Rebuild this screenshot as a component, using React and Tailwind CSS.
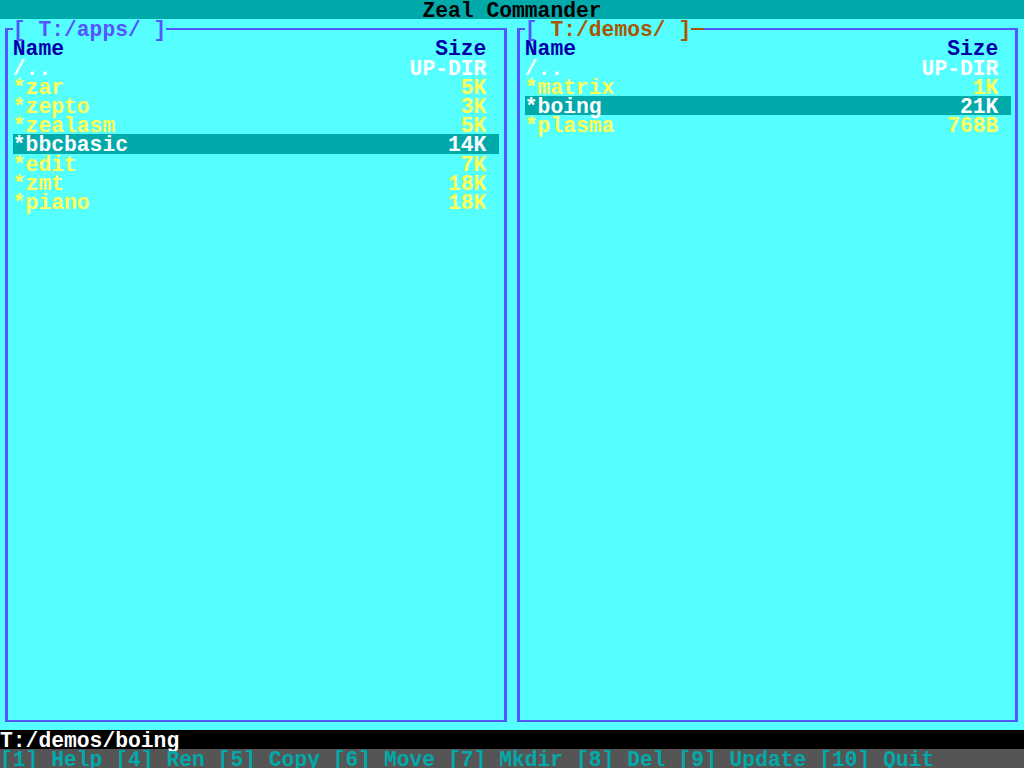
import React from 'react';

const leftFiles = [
  { name: '/..', size: 'UP-DIR', kind: 'up' },
  { name: '*zar', size: '5K' },
  { name: '*zepto', size: '3K' },
  { name: '*zealasm', size: '5K' },
  { name: '*bbcbasic', size: '14K', selected: true },
  { name: '*edit', size: '7K' },
  { name: '*zmt', size: '18K' },
  { name: '*piano', size: '18K' },
];

const rightFiles = [
  { name: '/..', size: 'UP-DIR', kind: 'up' },
  { name: '*matrix', size: '1K' },
  { name: '*boing', size: '21K', selected: true },
  { name: '*plasma', size: '768B' },
];

// one text cell row: 19.2px tall, baseline pushed down like the VGA font
const row = 'h-[19.2px] pt-[4px] leading-[15.2px]';

function FileRow({ file }) {
  let color = 'text-[#FFFF55]';
  if (file.kind === 'up') color = 'text-white';
  if (file.selected) color = 'text-white bg-[#00AAAA]';
  return (
    <div className={`flex w-[486.4px] justify-between pr-[12.8px] ${row} ${color}`}>
      <span>{file.name}</span>
      <span>{file.size}</span>
    </div>
  );
}

function Panel({ files, label, boxClass }) {
  return (
    <div className="relative h-[710.4px] w-[512px] flex">
      <div className={`flex-1 mt-[8.8px] mb-[7.6px] border-x-[3px] border-y-[2px] border-[#5555FF] pl-[4.8px] pt-[8.4px] ${boxClass}`}>
        <div className={`flex w-[486.4px] justify-between pr-[12.8px] text-[#0000AA] ${row}`}>
          <span>Name</span>
          <span>Size</span>
        </div>
        {files.map((f) => (
          <FileRow key={f.name} file={f} />
        ))}
      </div>
      {/* path label sits on top of the frame line */}
      <div className={`absolute top-0 left-[12.8px] flex bg-[#55FFFF] whitespace-pre ${row}`}>
        {label}
      </div>
    </div>
  );
}

export default function App() {
  return (
    <div className="h-[768px] w-[1024px] overflow-hidden bg-[#55FFFF] font-['Liberation_Mono','DejaVu_Sans_Mono',monospace] text-[21.333px] font-bold">
      <div className={`bg-[#00AAAA] text-center text-black ${row}`}>Zeal Commander</div>
      <div className="flex">
        <Panel
          files={leftFiles}
          boxClass="mx-[5px]"
          label={<span className="text-[#5555FF]">[ T:/apps/ ]</span>}
        />
        <Panel
          files={rightFiles}
          boxClass="ml-[5px] mr-[6px]"
          label={
            <>
              <span className="text-[#5555FF]">[ </span>
              <span className="text-[#AA5500]">T:/demos/ ]</span>
              <span className="-mt-[4px] flex h-[19.2px] w-[12.8px] items-center">
                <span className="mt-[0.4px] h-[2px] w-full bg-[#AA5500]" />
              </span>
            </>
          }
        />
      </div>
      <div className={`bg-black text-white ${row}`}>T:/demos/boing</div>
      <div className={`whitespace-pre bg-[#555555] text-[#00AAAA] ${row}`}>
        [1] Help [4] Ren [5] Copy [6] Move [7] Mkdir [8] Del [9] Update [10] Quit
      </div>
    </div>
  );
}
